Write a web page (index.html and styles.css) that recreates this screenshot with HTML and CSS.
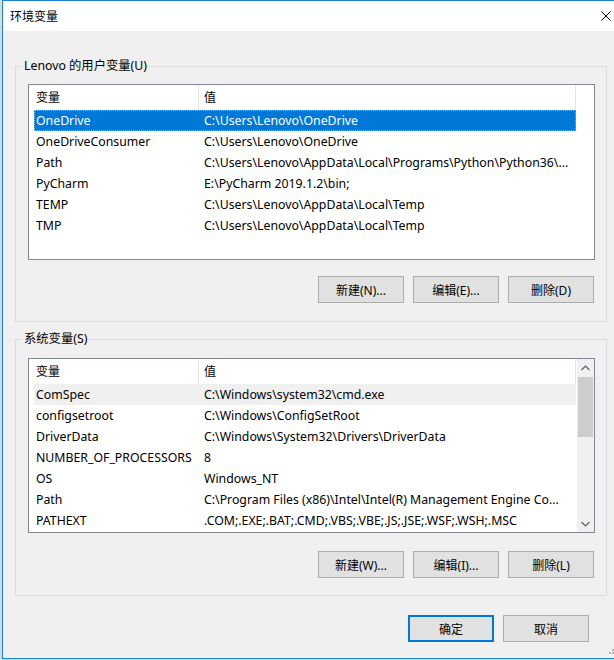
FILE: index.html
```html
<!DOCTYPE html>
<html lang="zh-CN">
<head>
<meta charset="utf-8">
<title>环境变量</title>
<link rel="stylesheet" href="styles.css">
</head>
<body>
<div class="window">
  <div class="titlebar">
    <span class="title">环境变量</span>
    <svg class="close" width="10" height="10" viewBox="0 0 10 10"><path d="M0.5 0.5 L9.5 9.5 M9.5 0.5 L0.5 9.5" stroke="#000" stroke-width="1" fill="none"/></svg>
  </div>
  <div class="client">
    <section class="group group-user">
      <div class="group-title">Lenovo 的用户变量(U)</div>
      <div class="list list-user">
        <div class="rows">
          <div class="hdr"><div class="c1">变量</div><div class="c2">值</div></div>
          <div class="row sel"><div class="c1">OneDrive</div><div class="c2">C:\Users\Lenovo\OneDrive</div></div>
          <div class="row"><div class="c1">OneDriveConsumer</div><div class="c2">C:\Users\Lenovo\OneDrive</div></div>
          <div class="row"><div class="c1">Path</div><div class="c2">C:\Users\Lenovo\AppData\Local\Programs\Python\Python36\...</div></div>
          <div class="row"><div class="c1">PyCharm</div><div class="c2">E:\PyCharm 2019.1.2\bin;</div></div>
          <div class="row"><div class="c1">TEMP</div><div class="c2">C:\Users\Lenovo\AppData\Local\Temp</div></div>
          <div class="row"><div class="c1">TMP</div><div class="c2">C:\Users\Lenovo\AppData\Local\Temp</div></div>
        </div>
      </div>
      <div class="btnrow">
        <button class="btn">新建(N)...</button>
        <button class="btn">编辑(E)...</button>
        <button class="btn">删除(D)</button>
      </div>
    </section>

    <section class="group group-sys">
      <div class="group-title">系统变量(S)</div>
      <div class="list list-sys">
        <div class="rows">
          <div class="hdr"><div class="c1">变量</div><div class="c2">值</div></div>
          <div class="row hot"><div class="c1">ComSpec</div><div class="c2">C:\Windows\system32\cmd.exe</div></div>
          <div class="row"><div class="c1">configsetroot</div><div class="c2">C:\Windows\ConfigSetRoot</div></div>
          <div class="row"><div class="c1">DriverData</div><div class="c2">C:\Windows\System32\Drivers\DriverData</div></div>
          <div class="row"><div class="c1">NUMBER_OF_PROCESSORS</div><div class="c2">8</div></div>
          <div class="row"><div class="c1">OS</div><div class="c2">Windows_NT</div></div>
          <div class="row"><div class="c1">Path</div><div class="c2">C:\Program Files (x86)\Intel\Intel(R) Management Engine Co...</div></div>
          <div class="row"><div class="c1">PATHEXT</div><div class="c2">.COM;.EXE;.BAT;.CMD;.VBS;.VBE;.JS;.JSE;.WSF;.WSH;.MSC</div></div>
        </div>
        <div class="scrollbar">
          <div class="sb-btn">
            <svg width="9" height="6" viewBox="0 0 9 6"><path d="M0.5 5 L4.5 1 L8.5 5" stroke="#606060" stroke-width="1.2" fill="none"/></svg>
          </div>
          <div class="sb-track"><div class="sb-thumb"></div></div>
          <div class="sb-btn">
            <svg width="9" height="6" viewBox="0 0 9 6"><path d="M0.5 1 L4.5 5 L8.5 1" stroke="#606060" stroke-width="1.2" fill="none"/></svg>
          </div>
        </div>
      </div>
      <div class="btnrow">
        <button class="btn">新建(W)...</button>
        <button class="btn">编辑(I)...</button>
        <button class="btn">删除(L)</button>
      </div>
    </section>

    <div class="dlgrow">
      <button class="btn btn-default">确定</button>
      <button class="btn">取消</button>
    </div>
  </div>
  <svg class="grip" width="9" height="9" viewBox="0 0 9 9">
    <rect x="6" y="0" width="2" height="2" fill="#b8b8b8"/>
    <rect x="3" y="3" width="2" height="2" fill="#b8b8b8"/>
    <rect x="6" y="3" width="2" height="2" fill="#b8b8b8"/>
  </svg>
</div>
</body>
</html>
```

FILE: styles.css
```css
html, body {
  margin: 0;
  padding: 0;
}
body {
  background: #dadada;
  width: 614px;
  height: 660px;
  overflow: hidden;
  font-family: "Noto Sans", "Noto Sans CJK SC", sans-serif;
  font-size: 12px;
  color: #000;
}
.window {
  position: relative;
  margin-left: 2px;
  width: 611px;
  height: 657px;
  border: 1px solid #1883d7;
  border-right: none;
  background: #f0f0f0;
}
.titlebar {
  height: 30px;
  background: #fff;
  display: flex;
  align-items: center;
  padding-left: 7px;
  padding-right: 3px;
}
.title {
  flex: 1;
  font-family: "Noto Sans CJK SC", sans-serif;
  font-size: 12px;
  line-height: 16px;
}
.close {
  display: block;
}
.client {
  padding-left: 12px;
  padding-top: 35px;
}
.group {
  box-sizing: border-box;
  width: 592px;
  border: 1px solid #dcdcdc;
  padding: 0 11px 18px 12px;
}
.group-sys {
  margin-top: 17px;
  padding-bottom: 17px;
}
.group-title {
  width: fit-content;
  margin: -9px 0 0 -6px;
  padding: 0 2px;
  line-height: 16px;
  background: #f0f0f0;
  font-size: 12.3px;
}
.list {
  box-sizing: border-box;
  height: 176px;
  border: 1px solid #828790;
  background: #fff;
  display: flex;
  overflow: hidden;
}
.list-user {
  margin-top: 10px;
}
.list-sys {
  margin-top: 11px;
  height: 175px;
}
.rows {
  flex: 1;
  padding-left: 5px;
  overflow: hidden;
}
.hdr, .row {
  display: flex;
  width: 542px;
  white-space: nowrap;
}
.hdr {
  height: 25px;
  line-height: 25px;
}
.hdr .c1 {
  box-sizing: border-box;
  width: 165px;
  padding-left: 2px;
  border-right: 1px solid #e5e5e5;
}
.hdr .c2 {
  box-sizing: border-box;
  width: 377px;
  padding-left: 5px;
  border-right: 1px solid #e5e5e5;
}
.row {
  height: 21px;
  line-height: 21px;
  font-size: 12.3px;
}
.row .c1 {
  box-sizing: border-box;
  width: 164px;
  padding-left: 2px;
  overflow: hidden;
}
.row .c2 {
  box-sizing: border-box;
  width: 378px;
  padding-left: 6px;
  overflow: hidden;
}
.row.sel {
  background: #0078d7;
  color: #fff;
  outline: 1px dotted #7fbcec;
  outline-offset: -1px;
}
.row.hot {
  background: #f0f0f0;
}
.scrollbar {
  width: 17px;
  background: #f0f0f0;
  display: flex;
  flex-direction: column;
}
.sb-btn {
  height: 17px;
  display: flex;
  align-items: center;
  justify-content: center;
}
.sb-track {
  flex: 1;
}
.sb-thumb {
  margin: 1px 1px 0 1px;
  height: 60px;
  background: #cdcdcd;
}
.btnrow {
  display: flex;
  justify-content: flex-end;
  gap: 9px;
  margin-top: 16px;
  padding-right: 1px;
}
.group-sys .btnrow {
  margin-top: 18px;
}
.btn {
  box-sizing: border-box;
  width: 86px;
  height: 27px;
  margin: 0;
  padding: 0;
  border: 1px solid #adadad;
  background: #e1e1e1;
  font-family: "Noto Sans", "Noto Sans CJK SC", sans-serif;
  font-size: 12px;
  color: #000;
}
.dlgrow {
  width: 592px;
  box-sizing: border-box;
  display: flex;
  justify-content: flex-end;
  gap: 9px;
  margin-top: 19px;
  padding-right: 18px;
}
.btn-default {
  border: 2px solid #0078d7;
}
.grip {
  position: absolute;
  left: 603px;
  top: 648px;
}
```
